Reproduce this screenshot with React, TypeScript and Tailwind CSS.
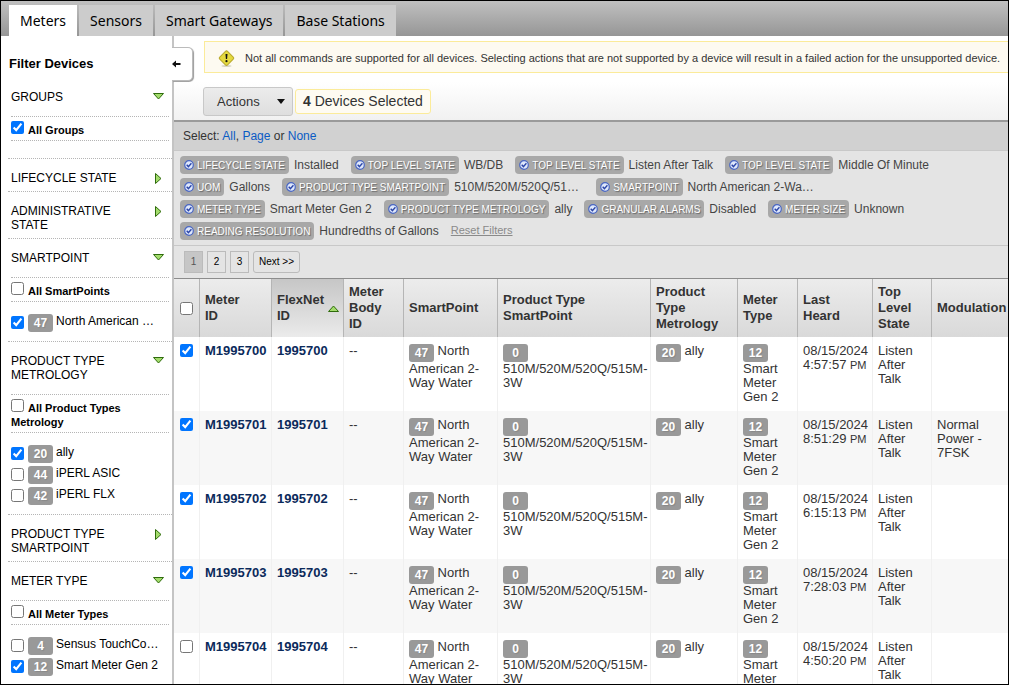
import React from "react";

const tabs = ["Meters", "Sensors", "Smart Gateways", "Base Stations"];

type Option = { count: number; label: string; checked?: boolean };
type Section = {
  title: string;
  open?: boolean;
  all?: string;
  allChecked?: boolean;
  options?: Option[];
};

const sections: Section[] = [
  { title: "GROUPS", open: true, all: "All Groups", allChecked: true },
  { title: "LIFECYCLE STATE" },
  { title: "ADMINISTRATIVE STATE" },
  {
    title: "SMARTPOINT",
    open: true,
    all: "All SmartPoints",
    options: [{ count: 47, label: "North American …", checked: true }],
  },
  {
    title: "PRODUCT TYPE METROLOGY",
    open: true,
    all: "All Product Types Metrology",
    options: [
      { count: 20, label: "ally", checked: true },
      { count: 44, label: "iPERL ASIC" },
      { count: 42, label: "iPERL FLX" },
    ],
  },
  { title: "PRODUCT TYPE SMARTPOINT" },
  {
    title: "METER TYPE",
    open: true,
    all: "All Meter Types",
    options: [
      { count: 4, label: "Sensus TouchCo…" },
      { count: 12, label: "Smart Meter Gen 2", checked: true },
    ],
  },
];

const filters: { tag: string; value: string; clipped?: boolean }[] = [
  { tag: "LIFECYCLE STATE", value: "Installed" },
  { tag: "TOP LEVEL STATE", value: "WB/DB" },
  { tag: "TOP LEVEL STATE", value: "Listen After Talk" },
  { tag: "TOP LEVEL STATE", value: "Middle Of Minute" },
  { tag: "UOM", value: "Gallons" },
  { tag: "PRODUCT TYPE SMARTPOINT", value: "510M/520M/520Q/51…", clipped: true },
  { tag: "SMARTPOINT", value: "North American 2-Wa…", clipped: true },
  { tag: "METER TYPE", value: "Smart Meter Gen 2" },
  { tag: "PRODUCT TYPE METROLOGY", value: "ally" },
  { tag: "GRANULAR ALARMS", value: "Disabled" },
  { tag: "METER SIZE", value: "Unknown" },
  { tag: "READING RESOLUTION", value: "Hundredths of Gallons" },
];

const meters = [
  { id: "1995700", time: "4:57:57", modulation: "", checked: true },
  { id: "1995701", time: "8:51:29", modulation: "Normal Power - 7FSK", checked: true },
  { id: "1995702", time: "6:15:13", modulation: "", checked: true },
  { id: "1995703", time: "7:28:03", modulation: "", checked: true },
  { id: "1995704", time: "4:50:20", modulation: "", checked: false },
];

function Triangle({ direction }: { direction: "up" | "down" | "right" }) {
  const points = {
    up: "0.5,6.5 5.5,1 10.5,6.5",
    down: "0.5,0.5 10.5,0.5 5.5,6",
    right: "0.5,0.5 6,5.5 0.5,10.5",
  }[direction];
  const vertical = direction === "right";
  return (
    <svg
      aria-hidden="true"
      width={vertical ? 7 : 11}
      height={vertical ? 11 : 7}
      className="shrink-0"
    >
      <polygon points={points} fill="#a3dc6c" stroke="#2f6b0c" strokeWidth="1" strokeLinejoin="round" />
    </svg>
  );
}

function Badge({ children }: { children: React.ReactNode }) {
  return (
    <span className="inline-block h-[18px] w-[25px] shrink-0 rounded-[3px] bg-[#999] text-center align-top text-[12px] leading-[18px] font-bold text-white [text-shadow:1px_1px_1px_#888]">
      {children}
    </span>
  );
}

function TagIcon() {
  return (
    <svg aria-hidden="true" width="10" height="10" viewBox="0 0 10 10" className="shrink-0">
      <circle cx="5" cy="5" r="4.3" fill="#dfe8fb" stroke="#4a67c4" strokeWidth="1.2" />
      <path d="M2.7 4.8 4.4 6.6 7.4 3.2" fill="none" stroke="#2b45a8" strokeWidth="1.4" />
    </svg>
  );
}

function SidebarSection({ section, first }: { section: Section; first: boolean }) {
  const { title, open, all, allChecked, options = [] } = section;
  return (
    <section className={first ? "" : "ml-[7px] border-t border-dotted border-[#b5b5b5]"}>
      <h3>
        <button
          type="button"
          aria-expanded={!!open}
          className={`flex w-full items-start justify-between pt-3 pr-2 text-left leading-[14px] ${
            first ? "pl-[10px]" : "pl-[3px]"
          } ${open ? "pb-3" : "pb-[6px]"}`}
        >
          <span className="w-[120px]">{title}</span>
          <span className={`flex w-[11px] justify-center ${open ? "pt-[3px]" : "pt-[2px]"}`}>
            <Triangle direction={open ? "down" : "right"} />
          </span>
        </button>
      </h3>
      {open && (
        <div className={first ? "ml-[10px]" : "ml-[3px]"}>
          <div className="mr-[3px] border-y border-dotted border-[#b5b5b5] pt-[4px] pb-[3px] text-[11px] leading-[14px] font-bold">
            <label>
              <input type="checkbox" defaultChecked={allChecked} className="mr-[4px] h-[13px] w-[13px]" />
              {all}
            </label>
          </div>
          <div className={`pt-[10px] ${options.length > 0 ? "pb-2" : "pb-[7px]"}`}>
            {options.map((option) => (
              <label key={option.label} className="flex h-[21px] items-start">
                <input
                  type="checkbox"
                  defaultChecked={option.checked}
                  className="mt-[4px] mr-[4px] h-[13px] w-[13px]"
                />
                <span className="mt-[2px] mr-[3px] flex">
                  <Badge>{option.count}</Badge>
                </span>
                <span className="leading-[18px]">{option.label}</span>
              </label>
            ))}
          </div>
        </div>
      )}
    </section>
  );
}

const columns = [
  { label: "Meter ID", width: "w-[72px]" },
  { label: "FlexNet ID", width: "w-[72px]", sorted: true },
  { label: "Meter Body ID", width: "w-[60px]" },
  { label: "SmartPoint", width: "w-[94px]" },
  { label: "Product Type SmartPoint", width: "w-[153px]" },
  { label: "Product Type Metrology", width: "w-[87px]" },
  { label: "Meter Type", width: "w-[60px]" },
  { label: "Last Heard", width: "w-[75px]" },
  { label: "Top Level State", width: "w-[59px]" },
  { label: "Modulation", width: "" },
];

function DeviceTable() {
  const cell = "border-l border-[#f0f0f0] pt-[7px] pb-[7px] pl-[5px] align-top";
  return (
    <table className="w-full table-fixed border-separate border-spacing-0 text-[13px] leading-[14px] text-[#333]">
      <colgroup>
        <col className="w-[25px]" />
        {columns.map((column) => (
          <col key={column.label} className={column.width} />
        ))}
      </colgroup>
      <thead>
        <tr className="h-[58px] bg-linear-to-b from-[#ececec] to-[#d9d9d9] text-left leading-[16px]">
          <th className="pl-[6px]">
            <input type="checkbox" aria-label="Select all devices" className="block h-[13px] w-[13px]" />
          </th>
          {columns.map((column) => (
            <th
              key={column.label}
              className={`border-l border-[#b5b5b5] pl-[5px] ${
                column.sorted ? "bg-linear-to-b from-[#c6c6c6] to-[#ebebeb] pr-1" : "pr-4"
              }`}
            >
              {column.sorted ? (
                <span className="flex items-center justify-between">
                  <span className="w-[50px]">{column.label}</span>
                  <Triangle direction="up" />
                </span>
              ) : (
                column.label
              )}
            </th>
          ))}
        </tr>
      </thead>
      <tbody>
        {meters.map((meter) => (
          <tr key={meter.id} className="bg-white even:bg-[#f7f7f7]">
            <td className="pt-[7px] pl-[6px] align-top">
              <input
                type="checkbox"
                aria-label={`Select M${meter.id}`}
                defaultChecked={meter.checked}
                className="block h-[13px] w-[13px]"
              />
            </td>
            <td className={cell}>
              <a href="#" className="font-bold text-[#0b2a5b]">
                M{meter.id}
              </a>
            </td>
            <td className={cell}>
              <a href="#" className="font-bold text-[#0b2a5b]">
                {meter.id}
              </a>
            </td>
            <td className={cell}>--</td>
            <td className={cell}>
              <Badge>47</Badge> North American 2-Way Water
            </td>
            <td className={cell}>
              <Badge>0</Badge> 510M/520M/520Q/515M-3W
            </td>
            <td className={cell}>
              <Badge>20</Badge> ally
            </td>
            <td className={cell}>
              <Badge>12</Badge> Smart Meter Gen 2
            </td>
            <td className={cell}>
              08/15/2024 {meter.time} <span className="text-[11px]">PM</span>
            </td>
            <td className={cell}>Listen After Talk</td>
            <td className={`${cell} pr-4`}>{meter.modulation}</td>
          </tr>
        ))}
      </tbody>
    </table>
  );
}

export default function App() {
  return (
    <div className="flex h-screen flex-col overflow-hidden border border-black bg-white font-['Liberation_Sans',Arial,sans-serif] text-[12px] text-black">
      <nav className="flex shrink-0 gap-[2px] bg-linear-to-b from-[#c0c0c0] to-[#969696] pt-1 pl-2 font-['Noto_Sans',sans-serif] text-[14px] leading-[31px]">
        {tabs.map((tab, index) => (
          <a key={tab} href="#" className={`px-[11px] ${index === 0 ? "bg-white" : "bg-[#ccc]"}`}>
            {tab}
          </a>
        ))}
      </nav>

      <div className="flex min-h-0 flex-1">
        <aside className="relative w-[173px] shrink-0 border-r-2 border-[#c4c4c4]">
          <h2 className="pt-[19px] pb-[5px] pl-2 text-[13px] leading-[18px] font-bold">Filter Devices</h2>
          {sections.map((section, index) => (
            <SidebarSection key={section.title} section={section} first={index === 0} />
          ))}
          <button
            type="button"
            aria-label="Collapse filters"
            className="absolute top-[11px] -right-[21px] flex h-[34px] w-[21px] items-center rounded-r-[5px] border border-l-0 border-[#bbb] bg-white shadow-[1px_1px_1px_#999]"
          >
            <svg aria-hidden="true" width="9" height="8" viewBox="0 0 9 8">
              <path d="M0 4 4 0.5V3H8.5V5H4V7.5Z" fill="#111" />
            </svg>
          </button>
        </aside>

        <main className="flex min-w-0 flex-1 flex-col">
          <div className="mt-[5px] ml-[30px] flex h-8 shrink-0 items-center gap-[10px] border border-r-0 border-[#fbeb9a] bg-[#fdfaf1] pt-[2px] pl-[13px] text-[#333]">
            <svg aria-hidden="true" width="17" height="17" viewBox="0 0 17 17" className="shrink-0">
              <ellipse cx="8.5" cy="16" rx="5" ry="1" fill="#d8d5c6" />
              <rect x="3" y="2.6" width="11" height="11" rx="1.5" transform="rotate(45 8.5 8.1)" fill="#e4d93e" stroke="#b9a92a" />
              <path d="M7.5 4h2l-.4 5h-1.2z" fill="#111" />
              <circle cx="8.5" cy="11.2" r="1.1" fill="#111" />
            </svg>
            <p className="text-[11px] whitespace-nowrap">
              Not all commands are supported for all devices. Selecting actions that are not supported by a device will
              result in a failed action for the unsupported device.
            </p>
          </div>

          <div className="relative mt-[9px] -mr-px flex h-[38px] shrink-0 items-center gap-[2px] bg-linear-to-b from-white to-[#f1f1f1] pt-[5px] pb-1 pl-[29px] text-[#333]">
            <button
              type="button"
              className="flex h-[29px] w-[90px] items-center justify-between rounded-[3px] border border-[#c8c8c8] bg-linear-to-b from-[#ececec] to-[#dedede] pr-[7px] pl-[13px] text-[13px]"
            >
              Actions
              <svg aria-hidden="true" width="8" height="5">
                <path d="M0 0H8L4 5Z" fill="#111" />
              </svg>
            </button>
            <p className="h-[25px] rounded-[3px] border border-[#fbeb9a] bg-[#fefbf2] px-[7px] text-[14px] leading-[23px]">
              <strong>4</strong> Devices Selected
            </p>
          </div>

          <div className="shrink-0 border-t-2 border-[#9a9a9a] bg-[#d1d1d1] pl-[9px] leading-7 text-[#333]">
            Select:{" "}
            <a href="#" className="text-[#0a5bc4]">
              All
            </a>
            ,{" "}
            <a href="#" className="text-[#0a5bc4]">
              Page
            </a>{" "}
            or{" "}
            <a href="#" className="text-[#0a5bc4]">
              None
            </a>
          </div>

          <div className="flex shrink-0 flex-wrap gap-x-3 gap-y-1 border-t border-[#c8c8c8] bg-[#e4e4e4] pt-[5px] pr-3 pb-[5px] pl-[6px] text-[#444]">
            {filters.map((filter, index) => (
              <div key={index} className="flex h-[18px] items-center gap-[5px]">
                <span className="flex h-[18px] items-center gap-[3px] rounded-[4px] bg-[#a8a8a8] px-1 text-[10px] text-white [text-shadow:1px_1px_1px_#666]">
                  <TagIcon />
                  {filter.tag}
                </span>
                <span className={`leading-[16px] ${filter.clipped ? "w-[130px]" : ""}`}>{filter.value}</span>
              </div>
            ))}
            <a href="#" className="text-[11px] leading-[17px] text-[#8a8a8a] underline">
              Reset Filters
            </a>
          </div>

          <div className="flex shrink-0 gap-1 border-t border-b border-t-[#c8c8c8] border-b-[#8c8c8c] bg-[#e4e4e4] py-[5px] pl-[10px] text-[10px] leading-5">
            <button type="button" className="w-[19px] border border-[#bbb] bg-[#c6c6c6] text-[#555]">
              1
            </button>
            <button type="button" className="w-[19px] border border-[#bbb]">
              2
            </button>
            <button type="button" className="w-[19px] border border-[#bbb]">
              3
            </button>
            <button type="button" className="rounded-[3px] border border-[#bbb] px-[5px]">
              Next &gt;&gt;
            </button>
          </div>

          <DeviceTable />
        </main>
      </div>
    </div>
  );
}
